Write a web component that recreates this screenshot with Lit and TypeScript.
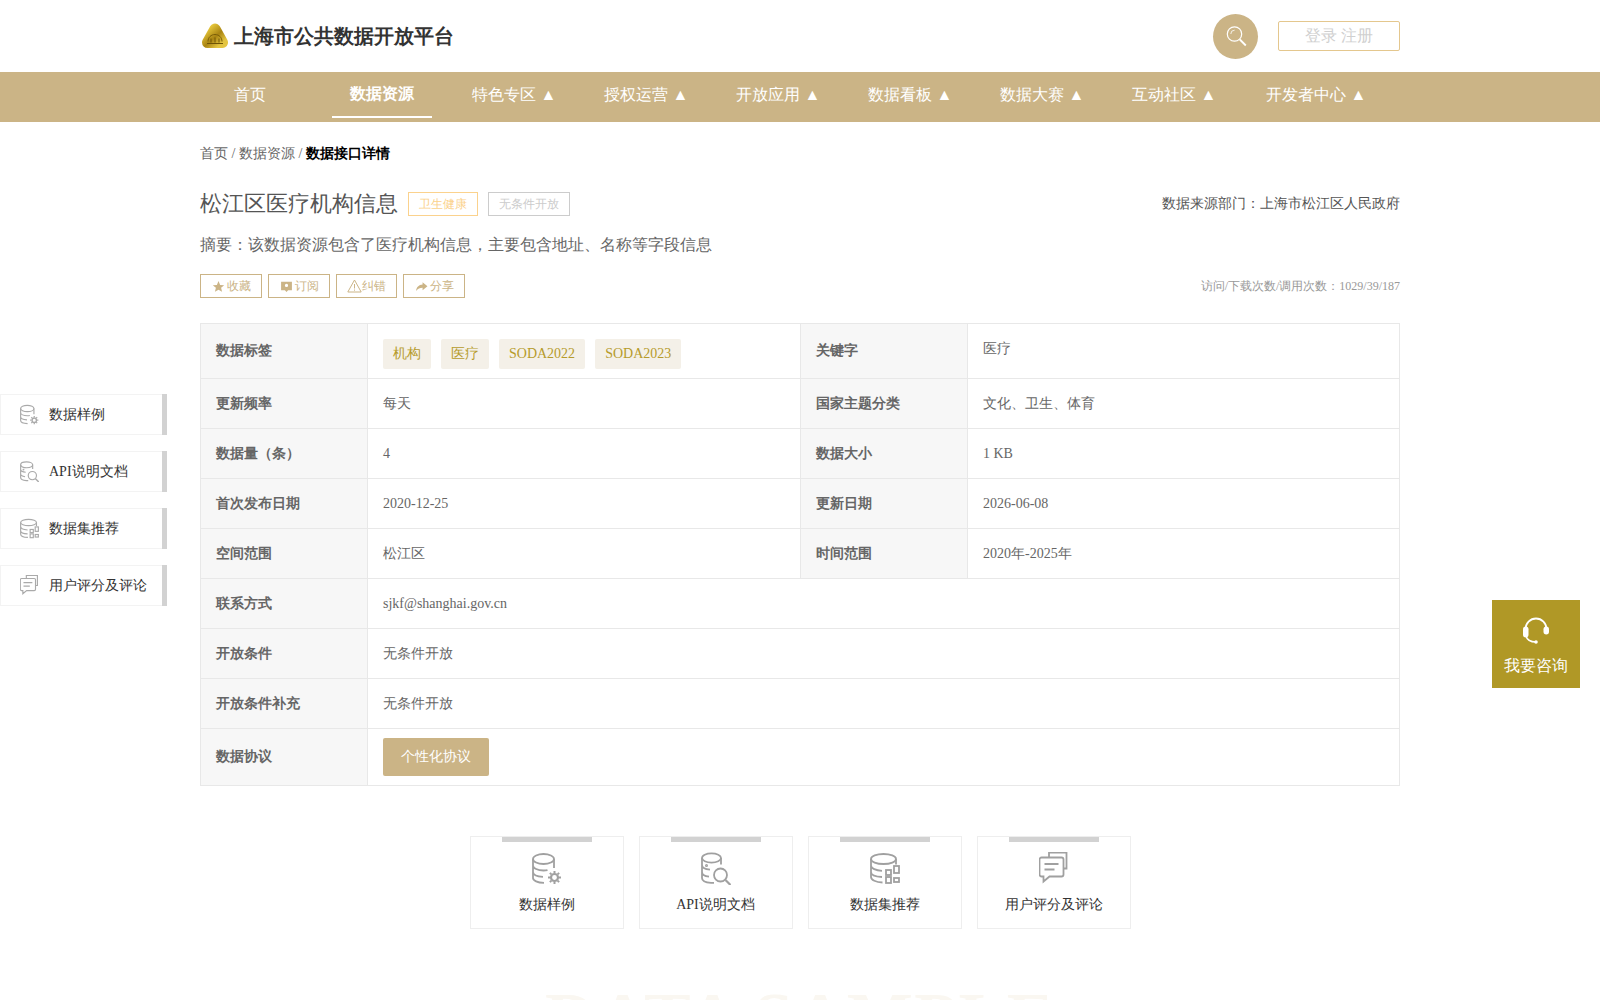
import { LitElement, html, css, svg } from "lit";
import { customElement } from "lit/decorators.js";

const gear = (x: number, y: number) => svg`<circle cx=${x} cy=${y} r="3.500" stroke-width="2.200"/><path stroke-width="2" d="M${x} ${y - 6.5}v2M${x} ${y + 4.5}v2M${x - 6.5} ${y}h2M${x + 4.5} ${y}h2M${x - 4.600} ${y - 4.600}l1.400 1.400M${x + 3.200} ${y + 3.200}l1.400 1.400M${x - 4.600} ${y + 4.600}l1.400-1.400M${x + 3.200} ${y - 3.200}l1.400-1.400"/>`;

const icons: Record<string, any> = {
  sample: svg`<path d="M24 11c0 2.800-4.700 5-10.500 5S3 13.800 3 11s4.700-5 10.500-5S24 8.200 24 11z"/><path d="M3 11v19c0 2.600 4.500 4.700 11 4.900M24 11v9M3 17.500c0 2.800 4.700 5 10.500 5 1.400 0 2.800-.1 4-.4M3 24c0 2.500 3.700 4.500 10 4.900"/>${gear(24.5, 29.5)}`,
  api: svg`<path d="M22 10c0 2.600-4.200 4.600-9.500 4.600S3 12.600 3 10s4.200-4.600 9.500-4.600S22 7.400 22 10z"/><path d="M3 10v20c0 2.600 3.600 4.600 9 4.800h3M22 10v6.500M3 17c0 2.500 3.200 4.300 8 4.700M3 24c0 2.400 2.700 4.200 7 4.700"/><circle cx="7.500" cy="17.500" r=".6"/><circle cx="21.500" cy="27" r="6.500"/><path d="M26.500 32l5 5" stroke-width="2.200"/>`,
  dataset: svg`<path d="M28 11c0 2.800-5.600 5-12.500 5S3 13.800 3 11s5.600-5 12.500-5S28 8.200 28 11z"/><path d="M3 11v18c0 3 5 5.300 11.500 5.500M28 11v5.500M3 17.500c0 2.800 4.800 5 11 5.300M3 24c0 2.600 4 4.700 11 5"/><rect x="18" y="22" width="5" height="5"/><rect x="26" y="18" width="5" height="7"/><rect x="18" y="29" width="5" height="6"/><rect x="26" y="30" width="5" height="4"/>`,
  comment: svg`<path d="M12 9V4.500h17.500v16H26"/><path d="M4.500 9.500h20a2 2 0 0 1 2 2v15a2 2 0 0 1-2 2H12.500l-6 5v-5h-2a2 2 0 0 1-2-2v-15a2 2 0 0 1 2-2z"/><path d="M7.500 16h14M7.500 21.500h10"/>`,
};

const icon = (name: string, cls: string) =>
  html`<svg class=${cls} viewBox="2 4 30 33" fill="none" stroke="currentColor" stroke-width="1.800">${icons[name]}</svg>`;

const anchors: [string, string][] = [
  ["sample", "数据样例"],
  ["api", "API说明文档"],
  ["dataset", "数据集推荐"],
  ["comment", "用户评分及评论"],
];

const nav = ["首页", "数据资源", "特色专区 ▲", "授权运营 ▲", "开放应用 ▲", "数据看板 ▲", "数据大赛 ▲", "互动社区 ▲", "开发者中心 ▲"];

@customElement("app-root")
export class AppRoot extends LitElement {
  static styles = css`
    :host {
      display: block;
      position: relative;
      height: 1000px;
      overflow: hidden;
      background: #fff;
      font-family: "Liberation Serif", serif;
      color: #666;
      font-size: 14px;
    }
    .wrap { width: 1200px; margin: 0 auto; }
    .top { height: 72px; }
    .top .wrap { display: flex; align-items: center; height: 72px; }
    .logo { width: 28px; height: 26px; margin: 0 5px 0 1px; flex: none; }
    .brand { font-size: 20px; font-weight: 700; color: #333; flex: 1; }
    .search {
      width: 45px; height: 45px; border-radius: 50%; background: #cbb486;
      display: flex; align-items: center; justify-content: center; margin-right: 20px;
    }
    .search svg { width: 22px; height: 22px; }
    .login {
      width: 122px; height: 30px; box-sizing: border-box; border: 1px solid #e4c78e; border-radius: 2px;
      display: flex; align-items: center; justify-content: center;
      font-size: 16px; color: #d0d0d0;
    }
    .nav { height: 50px; background: #cbb486; }
    .nav .wrap { display: flex; gap: 32px; height: 50px; }
    .nav a {
      width: 100px; flex: none; box-sizing: border-box; height: 46px;
      display: flex; align-items: center; justify-content: center;
      color: #fff; font-size: 16px; white-space: nowrap; word-spacing: 1px;
    }
    .nav a:last-child { width: 120px; }
    .nav a.on { font-weight: 700; border-bottom: 2px solid #fff; height: 46px; }
    .crumb { padding-top: 22px; line-height: 20px; color: #666; }
    .crumb b { color: #000; }
    .head { display: flex; align-items: center; margin-top: 23px; height: 34px; }
    .head h1 { margin: 0; font-size: 22px; font-weight: 400; color: #555; }
    .pill {
      box-sizing: border-box; height: 24px; line-height: 22px; padding: 0 10px; border: 1px solid #ccc;
      font-size: 12px; color: #ccc; margin-left: 10px;
    }
    .pill.gold { border-color: #fbd28d; color: #fbd28d; }
    .source { margin-left: auto; color: #555; }
    .abs { margin-top: 12px; line-height: 24px; font-size: 16px; color: #666; }
    .acts { display: flex; align-items: center; gap: 6px; margin-top: 17px; height: 24px; }
    .act {
      box-sizing: border-box; width: 62px; height: 24px; border: 1px solid #cbb486; color: #cbb486;
      font-size: 12px; display: flex; align-items: center; justify-content: center; gap: 2px;
    }
    .act.warn { width: 61px; gap: 0; }
    .act svg { width: 13px; height: 13px; fill: currentColor; flex: none; }
    .act svg.tri { width: 15px; height: 14px; fill: none; stroke: currentColor; }
    .count { margin-left: auto; font-size: 12px; color: #999; }
    table {
      width: 1200px; margin-top: 25px; border-collapse: separate; border-spacing: 0; table-layout: fixed;
      border-top: 1px solid #e8e8e8; border-left: 1px solid #e8e8e8;
    }
    td, th {
      border: 0 solid #e8e8e8; border-width: 0 1px 1px 0; padding: 0 15px; height: 50px; box-sizing: border-box;
      text-align: left; font-size: 14px; color: #666; vertical-align: middle;
    }
    th { background: #f7f7f7; font-weight: 700; color: #666; }
    tr.first td, tr.first th { height: 55px; }
    tr.first td.kw { padding-bottom: 4px; }
    tr.last td, tr.last th { height: 57px; }
    .tags { display: flex; gap: 10px; padding-top: 6px; }
    .tag {
      height: 30px; line-height: 30px; padding: 0 10px; border-radius: 2px; background: #f4f0e8;
      color: #b69b2c; font-size: 14px;
    }
    .agree {
      display: block; width: 106px; box-sizing: border-box; text-align: center; height: 38px; line-height: 38px; background: #cbb486; color: #fff; border-radius: 2px;
    }
    .cards { display: flex; justify-content: center; gap: 15px; margin-top: 50px; }
    .card {
      position: relative; box-sizing: border-box; width: 154px; height: 93px; border: 1px solid #eee;
      display: flex; flex-direction: column; align-items: center; color: #333; padding-top: 15px;
    }
    .card::before {
      content: ""; position: absolute; top: 0; left: 31px; width: 90px; height: 5px; background: #d2d2d2;
    }
    .bigicon { width: 30px; height: 33px; color: #a0a0a0; }
    .card span { margin-top: 10px; line-height: 20px; }
    .water {
      text-align: center; margin-top: 49px; font-size: 70px; line-height: 80px; font-weight: 700; color: #faf7f1; letter-spacing: 1.500px;
    }
    .side { position: absolute; left: 0; top: 394px; display: flex; flex-direction: column; gap: 16px; }
    .side a {
      position: relative; box-sizing: border-box; width: 167px; height: 41px; border: 1px solid #f3f3f3;
      display: flex; align-items: center; padding-left: 19px; gap: 10px; color: #333;
    }
    .side a::after { content: ""; position: absolute; right: -1px; top: -1px; bottom: -1px; width: 5px; background: #d2d2d2; }
    .smallicon { width: 19px; height: 21px; color: #aaa; flex: none; }
    .consult {
      position: absolute; left: 1492px; top: 600px; width: 88px; height: 88px; background: #b09826; color: #fff;
      display: flex; flex-direction: column; align-items: center; font-size: 16px;
    }
    .consult svg { width: 28px; height: 28px; margin-top: 17px; }
    .consult span { margin-top: 11px; line-height: 20px; }
  `;

  render() {
    return html`
      <div class="top"><div class="wrap">
        <svg class="logo" viewBox="0 0 28 26">
          <defs><linearGradient id="g" x1="0" y1="0" x2="1" y2="1"><stop offset="0" stop-color="#e6c63a"/><stop offset=".55" stop-color="#a98412"/><stop offset="1" stop-color="#e3c440"/></linearGradient></defs>
          <path d="M14 6L21.500 19.500H6.500z" fill="url(#g)" stroke="url(#g)" stroke-width="11" stroke-linejoin="round"/>
          <path d="M7 18.500c0-4 3-7 7-7s7 3 7 7" fill="none" stroke="#7a5e08" stroke-width="1"/>
          <path d="M6 20.500h16M10 15.500v4M14 14.500v5M18 15.500v4" fill="none" stroke="#6e5406" stroke-width="1"/>
        </svg>
        <div class="brand">上海市公共数据开放平台</div>
        <div class="search"><svg viewBox="0 0 22 22" fill="none" stroke="#fff" stroke-width="1.200"><circle cx="9.500" cy="9" r="7.200"/><path d="M5.800 9a3.800 3.800 0 0 1 3.800-3.800" stroke-width=".8"/><path d="M14.800 14.500l6 6" stroke-width="1.800"/></svg></div>
        <div class="login">登录 注册</div>
      </div></div>
      <div class="nav"><div class="wrap">
        ${nav.map((n, i) => html`<a class=${i === 1 ? "on" : ""}>${n}</a>`)}
      </div></div>
      <div class="wrap">
        <div class="crumb">首页 / 数据资源 / <b>数据接口详情</b></div>
        <div class="head">
          <h1>松江区医疗机构信息</h1>
          <span class="pill gold">卫生健康</span>
          <span class="pill">无条件开放</span>
          <span class="source">数据来源部门：上海市松江区人民政府</span>
        </div>
        <div class="abs">摘要：该数据资源包含了医疗机构信息，主要包含地址、名称等字段信息</div>
        <div class="acts">
          <div class="act"><svg viewBox="0 0 24 24"><path d="M12 2l3 7 7.500.6-5.700 4.900 1.800 7.300L12 18l-6.600 3.800 1.800-7.300L1.500 9.600 9 9z"/></svg>收藏</div>
          <div class="act"><svg viewBox="0 0 24 24"><path d="M2 3h20v16h-7l-3 3-3-3H2zM12 7a3 3 0 1 0 0 6 3 3 0 0 0 0-6z" fill-rule="evenodd"/></svg>订阅</div>
          <div class="act warn"><svg class="tri" viewBox="0 0 15 14" stroke-width="1"><path d="M7.500 1L14.200 13H.8z"/><path d="M7.500 5v4.500M7.500 10.500v1.200"/></svg>纠错</div>
          <div class="act"><svg viewBox="0 0 24 24"><path d="M14 4l9 7.500-9 7.500v-4.500c-5 0-9 1.500-12 6 .5-7 5-11.500 12-12z"/></svg>分享</div>
          <span class="count">访问/下载次数/调用次数：1029/39/187</span>
        </div>
        <table>
          <colgroup><col style="width:167px"/><col style="width:433px"/><col style="width:167px"/><col style="width:432px"/></colgroup>
          <tr class="first">
            <th>数据标签</th>
            <td><div class="tags"><span class="tag">机构</span><span class="tag">医疗</span><span class="tag">SODA2022</span><span class="tag">SODA2023</span></div></td>
            <th>关键字</th><td class="kw">医疗</td>
          </tr>
          <tr><th>更新频率</th><td>每天</td><th>国家主题分类</th><td>文化、卫生、体育</td></tr>
          <tr><th>数据量（条）</th><td>4</td><th>数据大小</th><td>1 KB</td></tr>
          <tr><th>首次发布日期</th><td>2020-12-25</td><th>更新日期</th><td>2026-06-08</td></tr>
          <tr><th>空间范围</th><td>松江区</td><th>时间范围</th><td>2020年-2025年</td></tr>
          <tr><th>联系方式</th><td colspan="3">sjkf@shanghai.gov.cn</td></tr>
          <tr><th>开放条件</th><td colspan="3">无条件开放</td></tr>
          <tr><th>开放条件补充</th><td colspan="3">无条件开放</td></tr>
          <tr class="last"><th>数据协议</th><td colspan="3"><span class="agree">个性化协议</span></td></tr>
        </table>
        <div class="cards">
          ${anchors.map(([k, t]) => html`<div class="card">${icon(k, "bigicon")}<span>${t}</span></div>`)}
        </div>
        <div class="water">DATA SAMPLE</div>
      </div>
      <div class="side">
        ${anchors.map(([k, t]) => html`<a>${icon(k, "smallicon")}${t}</a>`)}
      </div>
      <div class="consult">
        <svg viewBox="0 0 28 28" fill="none" stroke="#fff" stroke-width="1.800"><path d="M3.500 12a10.500 10.500 0 0 1 21 0"/><path d="M4 19c1 4 4.500 6 10 6" stroke-width="1.500"/><rect x="1" y="9.500" width="5.500" height="11" rx="2.750" fill="#fff" stroke="none"/><rect x="21.500" y="9.500" width="5.500" height="8" rx="2.750" fill="#fff" stroke="none"/><circle cx="14" cy="25" r="1.800" fill="#fff" stroke="none"/></svg>
        <span>我要咨询</span>
      </div>
    `;
  }
}
